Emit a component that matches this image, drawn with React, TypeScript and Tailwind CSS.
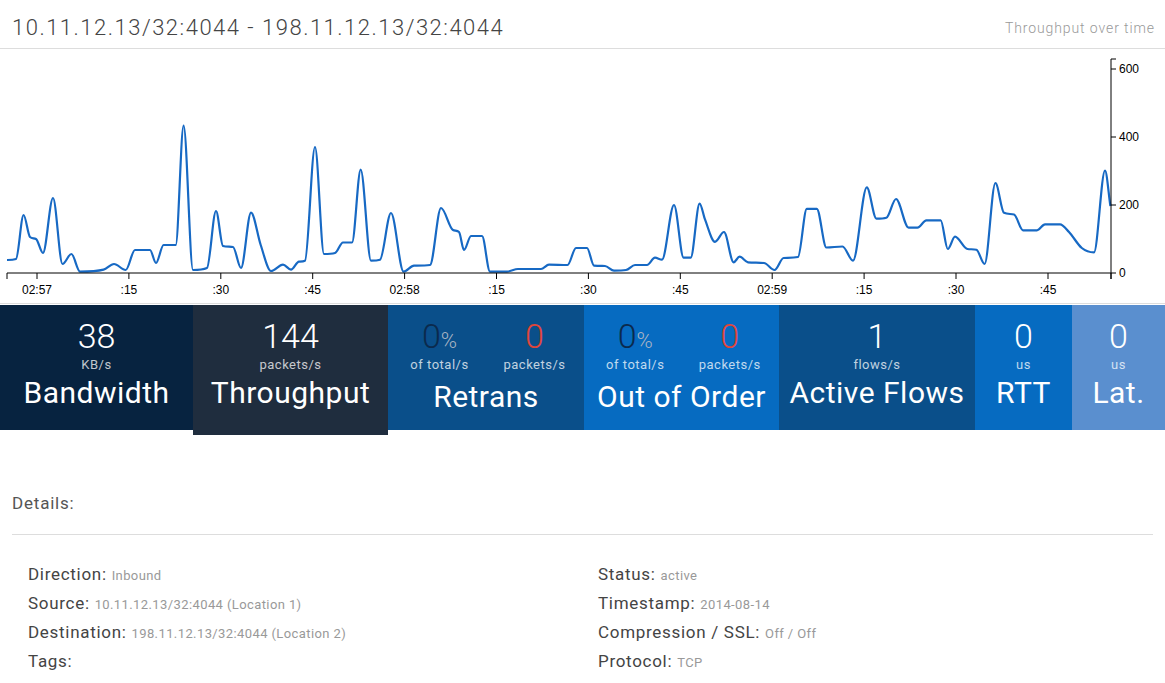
import React from "react";

type Pt = [number, number];

// points in page pixels, traced from the throughput graph
const points: Pt[] = [
  [7, 260], [16, 259], [23.6, 215], [30, 237], [36, 239], [43, 253], [53, 198], [62.5, 264],
  [71.4, 254], [80, 271.6], [103.6, 269.6], [114, 264], [125.7, 270], [135, 250], [150, 250],
  [156, 263], [163.6, 245], [175.7, 245], [183.6, 125.6], [193, 270], [207, 268], [216, 211],
  [223, 246], [233, 247], [241, 268], [251, 212.6], [260.7, 245], [271, 271], [283, 264.6],
  [291, 269.6], [299, 261.6], [305, 260.7], [315, 147], [324, 254], [335, 253], [343, 242.5],
  [352, 242.5], [360.7, 169.6], [371, 260.7], [380, 259.7], [391, 213], [403.6, 271.6],
  [414, 265.6], [430, 265], [441, 208], [453, 230], [459, 232], [464, 250], [471, 236],
  [482, 236], [490, 271.6], [507, 271.6], [518, 269], [541, 269], [549, 264.6], [567.5, 265],
  [576, 248], [587, 248], [594, 265.6], [605, 266], [614, 270.6], [626, 270], [635, 265],
  [647, 265], [655, 257.7], [662, 259.7], [674, 205], [683.6, 257.7], [690.7, 257.7],
  [699.6, 203.6], [705, 219.4], [715, 241.8], [724, 232], [733.6, 262.3], [739.6, 256.7],
  [748, 262.3], [764, 263], [774.6, 270], [783.6, 258], [798, 257], [806.8, 208.8],
  [816.8, 208.8], [826.4, 247.5], [842.5, 246.5], [853, 260.7], [866.8, 187.4], [876.4, 218.7],
  [886.4, 217.8], [896, 199], [908.6, 227.7], [917.5, 227.7], [926.4, 220.4], [940.7, 220.4],
  [947.8, 249], [955, 236.6], [967.5, 249], [976.4, 249.8], [984.6, 264], [995.4, 183],
  [1004, 212.8], [1014, 214.5], [1023, 230.3], [1037, 230.3], [1045, 224.4], [1060, 224.4],
  [1069, 232], [1081.8, 248], [1094, 252.4], [1105, 170.6], [1110.4, 206],
];

// monotone cubic so flat stretches don't overshoot
function monotonePath(pts: Pt[]) {
  const n = pts.length;
  const m: number[] = [];
  for (let i = 0; i < n - 1; i++) {
    m.push((pts[i + 1][1] - pts[i][1]) / (pts[i + 1][0] - pts[i][0]));
  }
  const t: number[] = [m[0]];
  for (let i = 1; i < n - 1; i++) {
    t.push(m[i - 1] * m[i] <= 0 ? 0 : (m[i - 1] + m[i]) / 2);
  }
  t.push(m[n - 2]);
  for (let i = 0; i < n - 1; i++) {
    if (m[i] === 0) {
      t[i] = 0;
      t[i + 1] = 0;
      continue;
    }
    const a = t[i] / m[i];
    const b = t[i + 1] / m[i];
    const s = a * a + b * b;
    if (s > 9) {
      const k = 3 / Math.sqrt(s);
      t[i] = k * a * m[i];
      t[i + 1] = k * b * m[i];
    }
  }
  let d = `M${pts[0][0]},${pts[0][1]}`;
  for (let i = 0; i < n - 1; i++) {
    const [x0, y0] = pts[i];
    const [x1, y1] = pts[i + 1];
    const h = (x1 - x0) / 3;
    d += `C${x0 + h},${y0 + t[i] * h} ${x1 - h},${y1 - t[i + 1] * h} ${x1},${y1}`;
  }
  return d;
}

const xTicks = [
  { x: 37, l: "02:57" }, { x: 128.9, l: ":15" }, { x: 220.8, l: ":30" }, { x: 312.7, l: ":45" },
  { x: 404.6, l: "02:58" }, { x: 496.5, l: ":15" }, { x: 588.4, l: ":30" }, { x: 680.3, l: ":45" },
  { x: 772.2, l: "02:59" }, { x: 864.1, l: ":15" }, { x: 956, l: ":30" }, { x: 1048, l: ":45" },
];
const yTicks = [
  { y: 273, l: "0" }, { y: 205, l: "200" }, { y: 137, l: "400" }, { y: 69, l: "600" },
];

const Chart = () => (
  <div className="border-b border-[#dddddd]">
    <svg className="block" width={1165} height={254} viewBox="0 49 1165 254">
      <path d={monotonePath(points)} fill="none" stroke="#1769c4" strokeWidth={2.2} />
      <g fontFamily="'Liberation Sans', Arial, sans-serif" fontSize={12} fill="#000">
        <path d="M7,279V273H1111V279" fill="none" stroke="#000" strokeWidth={1} />
        {xTicks.map((t) => (
          <g key={t.x}>
            <line x1={t.x} x2={t.x} y1={273} y2={279} stroke="#000" />
            <text x={t.x} y={294} textAnchor="middle">
              {t.l}
            </text>
          </g>
        ))}
        <path d="M1116,59H1111V279" fill="none" stroke="#000" strokeWidth={1} />
        {yTicks.map((t) => (
          <g key={t.y}>
            <line x1={1111} x2={1116} y1={t.y} y2={t.y} stroke="#000" />
            <text x={1119} y={t.y + 4}>
              {t.l}
            </text>
          </g>
        ))}
      </g>
    </svg>
  </div>
);

const Single: React.FC<{ value: string; unit: string; label: string; className: string }> = ({
  value,
  unit,
  label,
  className,
}) => (
  <div className={`flex flex-col items-center pt-[14px] text-white ${className}`}>
    <span className="h-[34px] text-[34px] leading-[34px] font-light">{value}</span>
    <span className="mt-[5px] text-[13px] leading-[14px] tracking-[0.5px] text-white/75">{unit}</span>
    <span className="mt-[3px] text-[30px] leading-[36px] tracking-[0.5px] whitespace-nowrap">{label}</span>
  </div>
);

const Double: React.FC<{ label: string; className: string }> = ({ label, className }) => (
  <div className={`flex flex-col items-center pt-[14px] text-white ${className}`}>
    <div className="flex w-full">
      <div className="flex flex-1 flex-col items-center pl-[4px]">
        <div className="flex h-[34px] items-baseline font-light">
          <span className="text-[34px] leading-[34px] text-[#0b2a4d]">0</span>
          <span className="text-[22px] leading-[22px] text-[#a9b4c4]">%</span>
        </div>
        <span className="mt-[5px] text-[13px] leading-[14px] tracking-[0.5px] text-white/75">of total/s</span>
      </div>
      <div className="flex flex-1 flex-col items-center pr-[2px]">
        <span className="h-[34px] text-[34px] leading-[34px] font-light text-[#e0463a]">0</span>
        <span className="mt-[5px] text-[13px] leading-[14px] tracking-[0.5px] text-white/75">packets/s</span>
      </div>
    </div>
    <span className="mt-[7px] text-[30px] leading-[36px] tracking-[0.5px] whitespace-nowrap">{label}</span>
  </div>
);

const Row: React.FC<{ label: string; value: string }> = ({ label, value }) => (
  <div className="h-[29px] leading-[29px] text-[17px] tracking-[0.7px] text-[#444]">
    {label}: <span className="text-[13px] tracking-[0.4px] text-[#999]">{value}</span>
  </div>
);

export default function App() {
  return (
    <div className="w-[1165px] bg-white font-['Roboto',sans-serif]">
      <div className="flex h-[49px] items-center justify-between border-b border-[#dddddd] pl-3 pr-[10px] pt-2">
        <h1 className="text-[22px] leading-6 font-light tracking-[1.5px] text-[#444]">
          10.11.12.13/32:4044 - 198.11.12.13/32:4044
        </h1>
        <span className="text-[14px] font-light tracking-[0.9px] text-[#999]">Throughput over time</span>
      </div>
      <Chart />
      <div className="mt-px flex items-start">
        <Single value="38" unit="KB/s" label="Bandwidth" className="h-[125px] w-[193px] bg-[#072340]" />
        <Single value="144" unit="packets/s" label="Throughput" className="h-[130px] w-[195px] bg-[#1f2d3e]" />
        <Double label="Retrans" className="h-[125px] w-[196px] bg-[#0a4f8a]" />
        <Double label="Out of Order" className="h-[125px] w-[195px] bg-[#066bc1]" />
        <Single value="1" unit="flows/s" label="Active Flows" className="h-[125px] w-[196px] bg-[#0a4f8a]" />
        <Single value="0" unit="us" label="RTT" className="h-[125px] w-[97px] bg-[#066bc1]" />
        <Single value="0" unit="us" label="Lat." className="h-[125px] w-[93px] bg-[#5a8fcf]" />
      </div>
      <div className="px-3">
        <h2 className="mt-[56px] text-[17px] leading-6 tracking-[0.8px] text-[#555]">Details:</h2>
        <div className="mt-[19px] border-t border-[#dddddd]" />
        <div className="mt-[25px] grid grid-cols-[570px_1fr] pl-4">
          <div>
            <Row label="Direction" value="Inbound" />
            <Row label="Source" value="10.11.12.13/32:4044 (Location 1)" />
            <Row label="Destination" value="198.11.12.13/32:4044 (Location 2)" />
            <Row label="Tags" value="" />
          </div>
          <div>
            <Row label="Status" value="active" />
            <Row label="Timestamp" value="2014-08-14" />
            <Row label="Compression / SSL" value="Off / Off" />
            <Row label="Protocol" value="TCP" />
          </div>
        </div>
      </div>
    </div>
  );
}
